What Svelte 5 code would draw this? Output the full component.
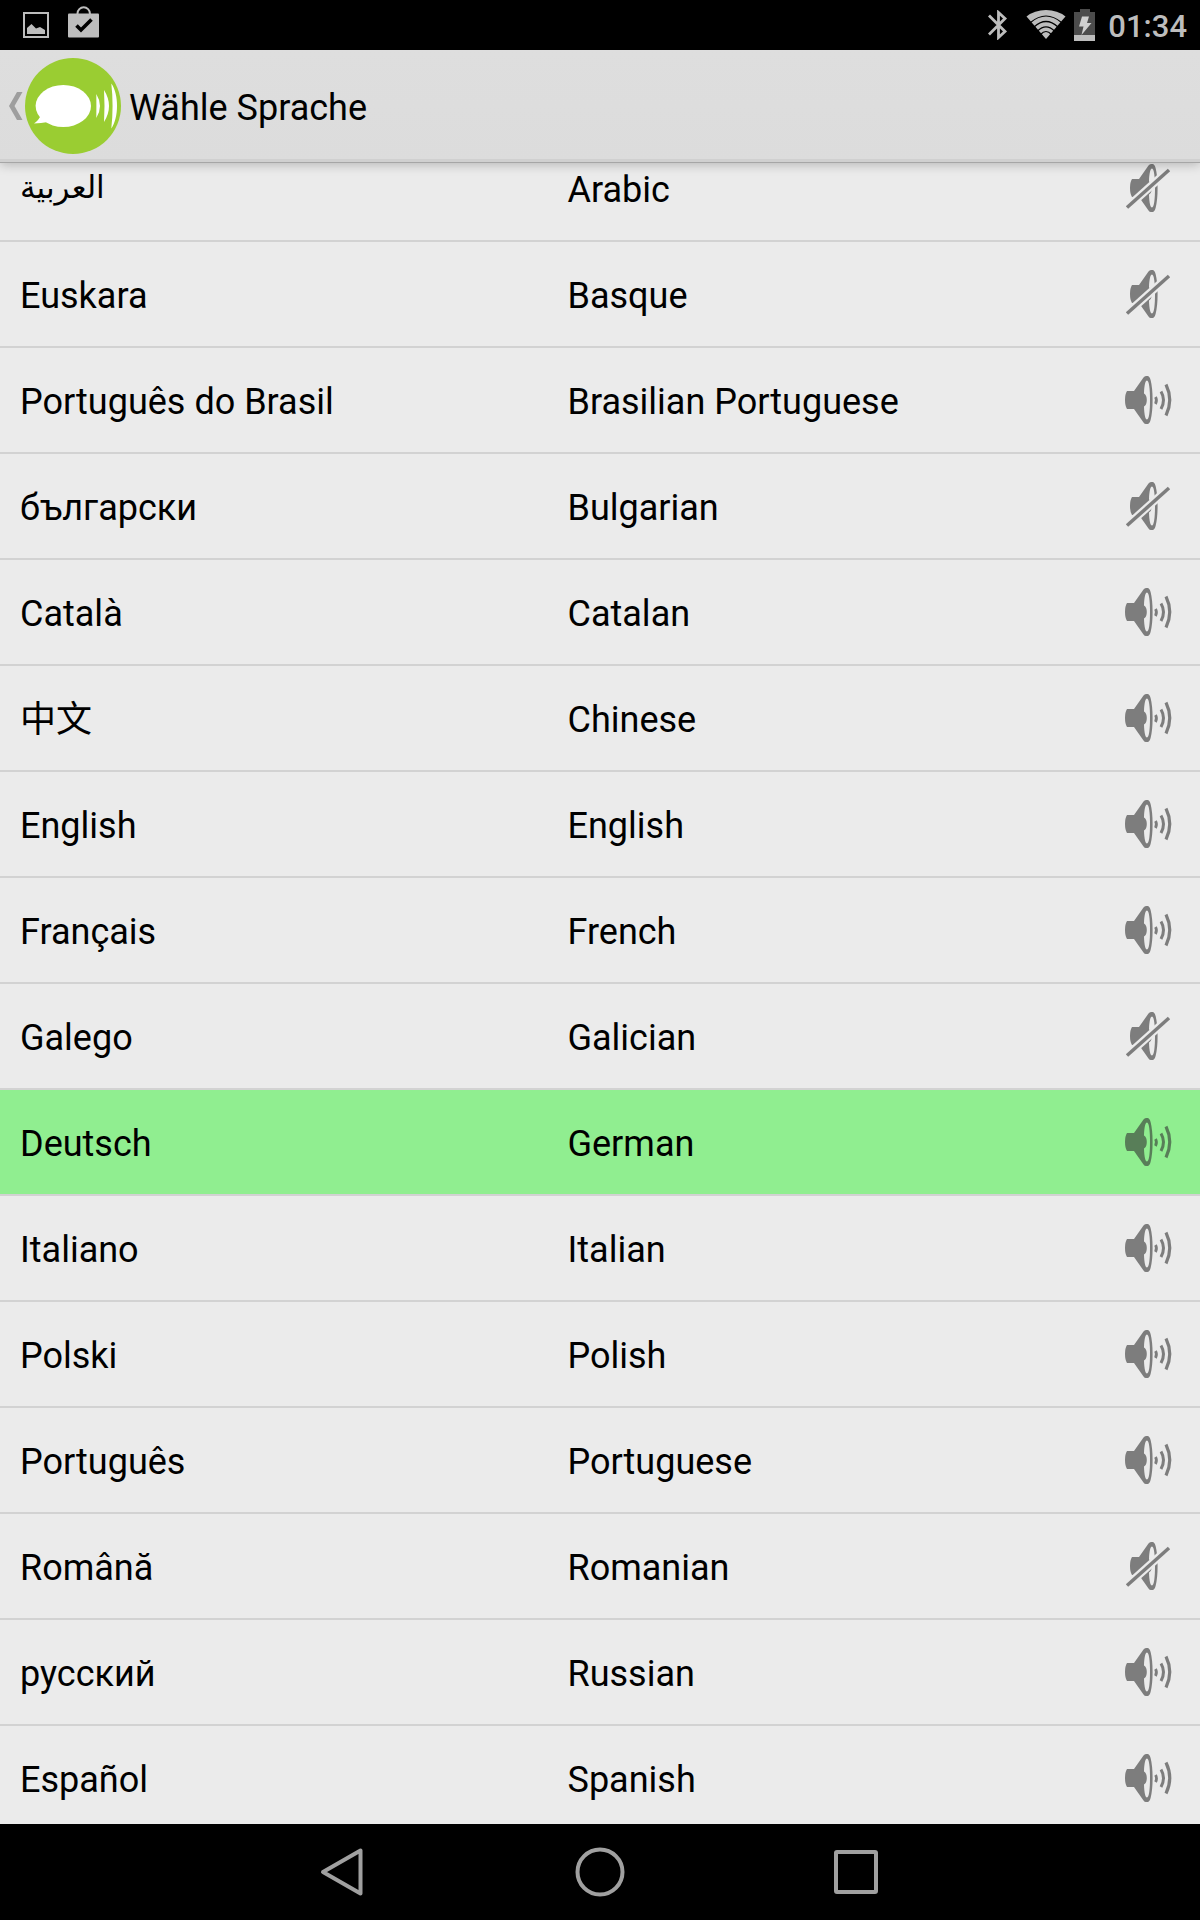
<script>
  let selected = $state('German');

  const languages = [
    { native: 'العربية', name: 'Arabic', lang: 'ar', voice: false },
    { native: 'Euskara', name: 'Basque', lang: 'eu', voice: false },
    { native: 'Português do Brasil', name: 'Brasilian Portuguese', lang: 'pt-BR', voice: true },
    { native: 'български', name: 'Bulgarian', lang: 'bg-Cyrl', voice: false },
    { native: 'Català', name: 'Catalan', lang: 'ca', voice: true },
    { native: '中文', name: 'Chinese', lang: 'zh', voice: true },
    { native: 'English', name: 'English', lang: 'en', voice: true },
    { native: 'Français', name: 'French', lang: 'fr', voice: true },
    { native: 'Galego', name: 'Galician', lang: 'gl', voice: false },
    { native: 'Deutsch', name: 'German', lang: 'de', voice: true },
    { native: 'Italiano', name: 'Italian', lang: 'it', voice: true },
    { native: 'Polski', name: 'Polish', lang: 'pl', voice: true },
    { native: 'Português', name: 'Portuguese', lang: 'pt', voice: true },
    { native: 'Română', name: 'Romanian', lang: 'ro', voice: false },
    { native: 'русский', name: 'Russian', lang: 'ru', voice: true },
    { native: 'Español', name: 'Spanish', lang: 'es', voice: true }
  ];
</script>

{#snippet horn()}
  <path
    fill-rule="evenodd"
    d="M7 19H14L23.5 5.5Q24.5 4 26 4H27.5Q29.5 4 30.6 8Q32.6 16 32.6 28T30.6 48Q29.5 52 27.5 52H26Q24.5 52 23.5 50.5L14 37H7Q5 34 5 28T7 19ZM27 8.5C25.5 8.5 24.2 13 24 21.5Q26.8 23 26.8 28T24 34.500C24.2 43 25.5 47.500 27 47.500C29 47.500 30 39 30 28S29 8.500 27 8.500Z"
  />
{/snippet}

<div class="screen">
  <div class="status">
    <div class="notes">
      <svg width="26" height="26" viewBox="0 0 26 26" aria-hidden="true">
        <rect x="1" y="1" width="24" height="24" fill="none" stroke="#bdbdbd" stroke-width="2" />
        <path d="M4 22V16L8.5 12L13 16.5L17 15L22 18V22Z" fill="#bdbdbd" />
      </svg>
      <svg width="32" height="32" viewBox="0 0 32 32" aria-hidden="true">
        <path d="M9.500 8.500V7.500A6.200 6.200 0 0 1 21.900 7.500V8.500" fill="none" stroke="#bdbdbd" stroke-width="2" />
        <rect x="0" y="7.500" width="31" height="24" rx="1" fill="#bdbdbd" />
        <path d="M8.500 19.500L13 24L23.500 13.500" fill="none" stroke="#000" stroke-width="3.600" />
      </svg>
    </div>
    <div class="system">
      <svg class="bluetooth" width="20" height="30" viewBox="0 0 20 30" aria-hidden="true">
        <path d="M1 5.500L17 21.500L10.500 27.500V2.500L17 8.500L1 24.500" fill="none" stroke="#bdbdbd" stroke-width="2.800" />
      </svg>
      <svg class="wifi" width="40" height="30" viewBox="0 0 40 30" aria-hidden="true">
        <path d="M20 29L.500 6.500Q8.500 0 20 0T39.500 6.500Z" fill="#bdbdbd" />
        <g fill="none" stroke="#000" stroke-width="1.200">
          <path d="M4.500 12.500Q20 -.500 35.500 12.500" />
          <path d="M8 17Q20 6 32 17" />
          <path d="M11.500 21Q20 12.500 28.500 21" />
          <path d="M14.500 24.500Q20 18.500 25.500 24.500" />
        </g>
      </svg>
      <svg class="battery" width="22" height="32" viewBox="0 0 22 32" aria-hidden="true">
        <path d="M0 3H6V0H16V3H21V32H0Z" fill="#4c4c4c" />
        <rect y="26" width="21" height="6" fill="#bdbdbd" />
        <path d="M8 7.500H15L13 14H17.500L7.500 26L9.500 17.500H5Z" fill="#d0d0d0" />
      </svg>
      <time>01:34</time>
    </div>
  </div>

  <header>
    <button class="up" aria-label="Zurück">
      <svg width="14" height="28" viewBox="0 0 14 28" aria-hidden="true">
        <path d="M8 0H13.500L5.500 14L13.500 28H8L0 14Z" fill="#9e9e9e" />
      </svg>
      <svg width="96" height="96" viewBox="0 0 96 96" aria-hidden="true">
        <circle cx="48" cy="48" r="48" fill="#9acd32" />
        <g fill="#fff">
          <ellipse cx="38.300" cy="48" rx="27.700" ry="21" />
          <path d="M16 57Q14 62 9 65.500Q16 65 23 64Z" />
          <path d="M71.300 36Q78.700 48 71.300 60Q71.500 48 71.300 36Z" />
          <path d="M79 32Q89 48 79 64Q80 48 79 32Z" />
          <path d="M86.300 25.500C94 36 94 60 86.300 70.500C88 56 88 40 86.300 25.500Z" />
        </g>
      </svg>
    </button>
    <h1>Wähle Sprache</h1>
  </header>

  <main>
    <ul>
      {#each languages as item (item.name)}
        <li>
          <button
            class="row"
            class:selected={selected === item.name}
            aria-pressed={selected === item.name}
            onclick={() => (selected = item.name)}
          >
            <span class:arabic={item.lang === 'ar'} lang={item.lang}>{item.native}</span>
            <span>{item.name}</span>
            <svg width="56" height="56" viewBox="0 0 56 56" aria-hidden="true">
              {#if item.voice}
                {@render horn()}
                <g fill="none" stroke="currentColor">
                  <path d="M35.500 25Q37.500 28.300 35.500 32" stroke-width="2.800" />
                  <path d="M41 19.500Q46 28 41 37" stroke-width="3" />
                  <path d="M46 12.500Q53.500 28 46 43.500" stroke-width="3.200" />
                </g>
              {:else}
                <g transform="translate(5 0)">{@render horn()}</g>
                <path class="gap" d="M5 49.300L51 8" />
                <path d="M7 47.500L49 10" stroke="currentColor" stroke-width="3.500" />
              {/if}
            </svg>
          </button>
        </li>
      {/each}
    </ul>
  </main>

  <nav>
    <button aria-label="Back">
      <svg width="50" height="50" viewBox="0 0 50 50" aria-hidden="true">
        <path d="M42.500 3.500V46.500L5 25Z" />
      </svg>
    </button>
    <button aria-label="Home">
      <svg width="50" height="50" viewBox="0 0 50 50" aria-hidden="true">
        <circle cx="25" cy="25" r="22.500" />
      </svg>
    </button>
    <button aria-label="Recent apps">
      <svg width="50" height="50" viewBox="0 0 50 50" aria-hidden="true">
        <rect x="4" y="5" width="40" height="40" rx="1" />
      </svg>
    </button>
  </nav>
</div>

<style>
  :global(body) {
    margin: 0;
  }

  .screen {
    display: flex;
    flex-direction: column;
    height: 100vh;
    overflow: hidden;
    background: #ebebeb;
    color: #000;
    font-family: Roboto, 'Noto Sans CJK SC', 'DejaVu Sans', sans-serif;
    font-size: 36px;
  }

  button {
    border: 0;
    padding: 0;
    background: none;
    color: inherit;
    font: inherit;
    cursor: pointer;
  }

  svg {
    display: block;
    flex: none;
  }

  .status {
    display: flex;
    flex: none;
    justify-content: space-between;
    box-sizing: border-box;
    height: 50px;
    padding: 0 13px 0 23px;
    background: #000;
    color: #bdbdbd;
  }

  .notes {
    display: flex;
    align-items: flex-end;
    gap: 19px;
    padding-bottom: 12px;
  }

  .system {
    display: flex;
    align-items: center;
  }

  .wifi {
    margin-left: 18px;
  }

  .battery {
    margin: 0 12px 0 8px;
  }

  time {
    padding-top: 2px;
    font-size: 31px;
    font-weight: 500;
  }

  header {
    display: flex;
    flex: none;
    align-items: center;
    gap: 8px;
    position: relative;
    z-index: 1;
    box-sizing: border-box;
    height: 113px;
    padding-left: 9px;
    border-bottom: 1px solid #a6a6a6;
    background: linear-gradient(#dedede, #dcdcdc);
    box-shadow:
      inset 0 -3px #d0d0d0,
      0 2px 10px rgba(0, 0, 0, 0.22);
  }

  .up {
    display: flex;
    align-items: center;
    gap: 2px;
  }

  h1 {
    margin: 0;
    padding-top: 4px;
    font-size: 36px;
    font-weight: 400;
  }

  main {
    flex: 1;
    min-height: 0;
    overflow: hidden;
  }

  /* The list is scrolled a little, so its first row slides under the header. */
  ul {
    margin: -27px 0 0;
    padding: 0;
    list-style: none;
  }

  li {
    border-bottom: 2px solid #d2d2d2;
  }

  .row {
    --surface: #ebebeb;
    display: grid;
    grid-template-columns: 1fr 1fr 61px;
    align-items: center;
    width: 100%;
    height: 104px;
    padding: 0 24px 0 20px;
    background: var(--surface);
    text-align: left;
  }

  .row.selected {
    --surface: #90ee90;
  }

  .row span {
    padding-top: 3px;
    line-height: 42px;
  }

  .row .arabic {
    padding: 0;
    font-size: 31px;
  }

  .row svg {
    justify-self: end;
    color: rgba(51, 51, 51, 0.6);
    fill: currentColor;
  }

  .gap {
    stroke: var(--surface);
    stroke-width: 8px;
  }

  nav {
    display: flex;
    flex: none;
    align-items: center;
    justify-content: center;
    gap: 207px;
    height: 96px;
    background: #000;
  }

  nav svg {
    fill: none;
    stroke: #a0a0a0;
    stroke-width: 4px;
    stroke-linejoin: round;
  }
</style>
